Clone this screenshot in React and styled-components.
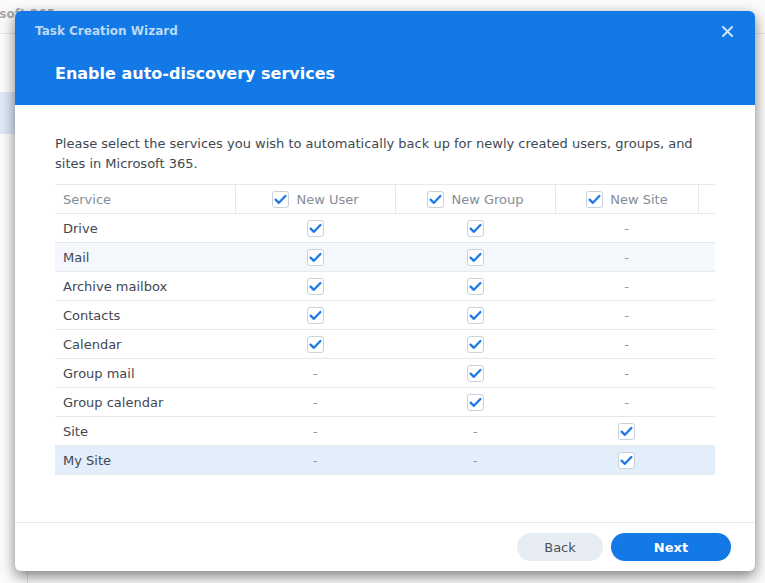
import styled, { createGlobalStyle } from "styled-components";

// Colors
const blue = '#1279e6';
const text1 = '#3e4852';
const text2 = '#858d96';
const line = '#e6e9ec';
const font = '"DejaVu Sans", Verdana, sans-serif';

const Global = createGlobalStyle`
  body {
    margin: 0;
    font-family: ${font};
    background: #f7f8f9;
  }
`;

const Page = styled.div`
  position: relative;
  width: 765px;
  height: 583px;
  overflow: hidden;
  background: #fbfbfc;
`;

const TopBar = styled.div`
  height: 34px;
  border-bottom: 1px solid #e3e5e8;
  box-sizing: border-box;
  display: flex;
  align-items: flex-start;
  padding-top: 7px;
  font-size: 12px;
  font-weight: bold;
  color: #a4a9ae;
`;

const AppName = styled.span`
  margin-left: -38px;
`;

const Main = styled.div`
  display: flex;
  height: 549px;
`;

const Sidebar = styled.div`
  width: 27px;
  border-right: 1px solid #dde0e4;
  padding-top: 58px;
`;

const SideItem = styled.div`
  height: 42px;
  background: #dde8f5;
`;

const Dialog = styled.div`
  position: absolute;
  left: 15px;
  top: 11px;
  width: 740px;
  height: 560px;
  background: #fff;
  border-radius: 6px;
  overflow: hidden;
  display: flex;
  flex-direction: column;
  box-shadow: 0 5px 14px rgba(0, 0, 0, 0.5);
`;

const Header = styled.div`
  position: relative;
  height: 94px;
  background: ${blue};
  padding: 12px 20px 0;
  box-sizing: border-box;
`;

const WizardName = styled.div`
  font-size: 12px;
  font-weight: bold;
  color: rgba(255, 255, 255, 0.72);
  line-height: 16px;
`;

const Heading = styled.h1`
  margin: 24px 0 0 20px;
  font-size: 16px;
  line-height: 22px;
  font-weight: bold;
  color: #fff;
`;

const Close = styled.button`
  position: absolute;
  right: 20px;
  top: 12px;
  width: 16px;
  height: 16px;
  padding: 0;
  border: 0;
  background: none;
  display: flex;
  align-items: center;
  justify-content: center;
`;

const Body = styled.div`
  flex: 1;
  padding: 29px 40px 0;
`;

const Intro = styled.p`
  margin: 0 0 10px;
  font-size: 13px;
  line-height: 20px;
  color: ${text1};
`;

const Table = styled.div`
  border-top: 1px solid ${line};
`;

const Row = styled.div`
  display: grid;
  grid-template-columns: 180px 160px 160px 143px 17px;
  height: 29px;
  border-bottom: 1px solid ${line};
  box-sizing: border-box;
  background: ${p => (p.$selected ? '#e3eefb' : p.$striped ? '#f4f8fd' : '#fff')};
`;

const Cell = styled.div`
  display: flex;
  align-items: center;
  justify-content: ${p => (p.$center ? 'center' : 'flex-start')};
  padding: 0 ${p => (p.$center ? 0 : 8)}px;
  font-size: 13px;
  color: ${p => (p.$muted ? text2 : text1)};
  gap: 7px;
`;

const HeadCell = styled(Cell)`
  color: ${text2};
  border-left: ${p => (p.$first ? 'none' : `1px solid ${line}`)};
`;

const Dash = styled.span`
  color: #8f979f;
  font-size: 13px;
`;

const Box = styled.span`
  width: 17px;
  height: 17px;
  box-sizing: border-box;
  border: 1px solid #c9d1da;
  border-radius: 3px;
  background: #fff;
  display: inline-flex;
  align-items: center;
  justify-content: center;
`;

const Footer = styled.div`
  height: 48px;
  border-top: 1px solid ${line};
  display: flex;
  align-items: center;
  justify-content: flex-end;
  gap: 8px;
  padding: 0 24px 0 0;
`;

const Button = styled.button`
  height: 28px;
  width: ${p => p.$width}px;
  border: 0;
  border-radius: 14px;
  font-family: ${font};
  font-size: 13px;
  font-weight: ${p => (p.$primary ? 'bold' : 'normal')};
  background: ${p => (p.$primary ? blue : '#e8edf3')};
  color: ${p => (p.$primary ? '#fff' : '#4a535c')};
`;

const Check = () => (
  <Box>
    <svg width="13" height="11" viewBox="0 0 13 11">
      <path d="M1.6 5.6 L4.9 8.8 L11.4 2" fill="none" stroke="#1b7be2" strokeWidth="2.3" strokeLinecap="round" strokeLinejoin="round" />
    </svg>
  </Box>
);

const services = [
  ['Drive', 1, 1, 0],
  ['Mail', 1, 1, 0],
  ['Archive mailbox', 1, 1, 0],
  ['Contacts', 1, 1, 0],
  ['Calendar', 1, 1, 0],
  ['Group mail', 0, 1, 0],
  ['Group calendar', 0, 1, 0],
  ['Site', 0, 0, 1],
  ['My Site', 0, 0, 1],
];

const Mark = ({ on }) => (on ? <Check /> : <Dash>-</Dash>);

export default function App() {
  return (
    <Page>
      <Global />
      <TopBar>
        <AppName>Microsoft 365</AppName>
      </TopBar>
      <Main>
        <Sidebar>
          <SideItem />
        </Sidebar>
      </Main>

      <Dialog>
        <Header>
          <WizardName>Task Creation Wizard</WizardName>
          <Heading>Enable auto-discovery services</Heading>
          <Close>
            <svg width="11" height="11" viewBox="0 0 11 11">
              <path d="M1 1 L10 10 M10 1 L1 10" stroke="rgba(255,255,255,0.8)" strokeWidth="2" strokeLinecap="round" />
            </svg>
          </Close>
        </Header>

        <Body>
          <Intro>
            Please select the services you wish to automatically back up for newly created users, groups, and sites in Microsoft 365.
          </Intro>
          <Table>
            <Row>
              <HeadCell $first>Service</HeadCell>
              <HeadCell $center><Check />New User</HeadCell>
              <HeadCell $center><Check />New Group</HeadCell>
              <HeadCell $center><Check />New Site</HeadCell>
              <HeadCell />
            </Row>
            {services.map(([name, user, group, site], i) => (
              <Row key={name} $striped={i === 1} $selected={i === services.length - 1}>
                <Cell>{name}</Cell>
                <Cell $center><Mark on={user} /></Cell>
                <Cell $center><Mark on={group} /></Cell>
                <Cell $center><Mark on={site} /></Cell>
                <Cell />
              </Row>
            ))}
          </Table>
        </Body>

        <Footer>
          <Button $width={86}>Back</Button>
          <Button $width={120} $primary>Next</Button>
        </Footer>
      </Dialog>
    </Page>
  );
}
